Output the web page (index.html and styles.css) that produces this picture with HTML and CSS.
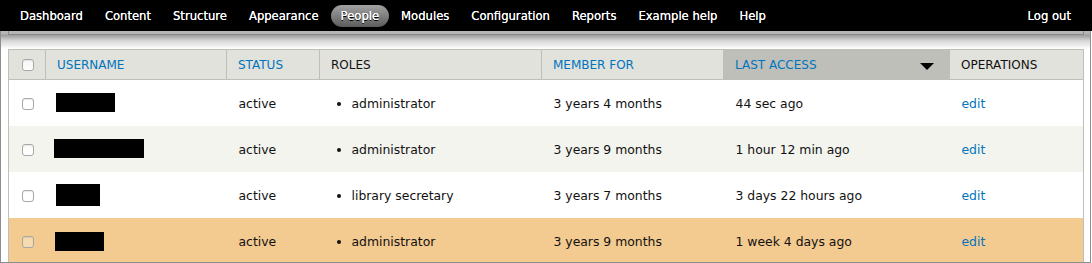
FILE: index.html
```html
<!DOCTYPE html>
<html lang="en">
<head>
  <meta charset="UTF-8" />
  <title>People</title>
  <link rel="stylesheet" href="styles.css">
</head>
<body>
  <div class="toolbar">
    <ul class="menu">
      <li><a href="#">Dashboard</a></li>
      <li><a href="#">Content</a></li>
      <li><a href="#">Structure</a></li>
      <li><a href="#">Appearance</a></li>
      <li><a href="#" class="active">People</a></li>
      <li><a href="#">Modules</a></li>
      <li><a href="#">Configuration</a></li>
      <li><a href="#">Reports</a></li>
      <li><a href="#">Example help</a></li>
      <li><a href="#">Help</a></li>
    </ul>
    <a href="#" class="logout">Log out</a>
  </div>

  <div class="frame">
    <div class="drawer"></div>

    <table class="people">
      <colgroup>
        <col class="c-check"><col class="c-user"><col class="c-status"><col class="c-roles">
        <col class="c-member"><col class="c-access"><col class="c-ops">
      </colgroup>
      <thead>
        <tr>
          <th><span class="checkbox"></span></th>
          <th><a href="#">Username</a></th>
          <th><a href="#">Status</a></th>
          <th>Roles</th>
          <th><a href="#">Member for</a></th>
          <th class="sorted"><a href="#">Last access</a><span class="arrow"></span></th>
          <th>Operations</th>
        </tr>
      </thead>
      <tbody>
        <tr>
          <td><span class="checkbox"></span></td>
          <td><span class="redact r1"></span></td>
          <td>active</td>
          <td><ul class="roles"><li>administrator</li></ul></td>
          <td>3 years 4 months</td>
          <td>44 sec ago</td>
          <td><a href="#">edit</a></td>
        </tr>
        <tr class="even">
          <td><span class="checkbox"></span></td>
          <td><span class="redact r2"></span></td>
          <td>active</td>
          <td><ul class="roles"><li>administrator</li></ul></td>
          <td>3 years 9 months</td>
          <td>1 hour 12 min ago</td>
          <td><a href="#">edit</a></td>
        </tr>
        <tr>
          <td><span class="checkbox"></span></td>
          <td><span class="redact r3"></span></td>
          <td>active</td>
          <td><ul class="roles"><li>library secretary</li></ul></td>
          <td>3 years 7 months</td>
          <td>3 days 22 hours ago</td>
          <td><a href="#">edit</a></td>
        </tr>
        <tr class="hover">
          <td><span class="checkbox"></span></td>
          <td><span class="redact r4"></span></td>
          <td>active</td>
          <td><ul class="roles"><li>administrator</li></ul></td>
          <td>3 years 9 months</td>
          <td>1 week 4 days ago</td>
          <td><a href="#">edit</a></td>
        </tr>
      </tbody>
    </table>
  </div>
</body>
</html>
```

FILE: styles.css
```css
:root {
  --link: #0074bd;
  --head-bg: #e1e2dc;
  --sorted-bg: #bebfb9;
  --line: #bebfb9;
  --even: #f3f4ee;
  --hover: #f3ca8f;
  --font: 'DejaVu Sans', sans-serif;
}

body {
  margin: 0;
  width: 1092px;
  height: 263px;
  overflow: hidden;
  font-family: var(--font);
  background: #fff;
  color: #111;
}

/* toolbar */
.toolbar {
  height: 31px;
  background: #000;
  display: flex;
  align-items: center;
  justify-content: space-between;
  padding: 0 21px 0 10px;
  position: relative;
  z-index: 2;
}

.menu {
  list-style: none;
  margin: 0;
  padding: 0;
  display: flex;
  gap: 2px;
}

.menu a,
.logout {
  display: block;
  padding: 0 10px;
  height: 22px;
  line-height: 22px;
  border-radius: 11px;
  color: #fff;
  text-decoration: none;
  font-size: 11.6px;
  text-shadow: 0 0 0.4px #fff, 0 1px 0 #000;
}

.logout {
  padding: 0;
}

.menu a.active {
  background: linear-gradient(#a2a2a2, #5c5c5c);
}

/* page frame below toolbar */
.frame {
  width: 1091px;
  height: 232px;
  box-sizing: border-box;
  border: 1px solid #8e8e8e;
  border-top: none;
  background: linear-gradient(#b8b8b8 0, #b4b4b4 3px, #9c9c9c 4px, #d8d8d8 10px, #fff 18px);
  overflow: hidden;
}

.drawer {
  height: 3px;
  margin: 0 6px 14px 7px;
  border: 1px solid #8a8a8a;
  border-top: none;
}

/* people table */
.people {
  width: 1075px;
  margin-left: 7px;
  table-layout: fixed;
  border-collapse: collapse;
  border: 1px solid var(--line);
  font-size: 12.4px;
  background: #fff;
}

.c-check { width: 37px; }
.c-user { width: 181px; }
.c-status { width: 93px; }
.c-roles { width: 222px; }
.c-member { width: 182px; }
.c-access { width: 226px; }
.c-ops { width: 134px; }

.people th {
  height: 29px;
  padding: 0 11px;
  background: var(--head-bg);
  border: 1px solid var(--line);
  text-align: left;
  font-weight: normal;
  font-size: 12px;
  text-transform: uppercase;
  color: #111;
}

.people th.sorted {
  background: var(--sorted-bg);
}

.people td {
  height: 46px;
  padding: 0 12px;
}

.people th:first-child,
.people td:first-child {
  padding: 0 0 0 13px;
}

.people a {
  color: var(--link);
  text-decoration: none;
}

.people tr.even td {
  background: var(--even);
}

.people tr.hover td {
  background: var(--hover);
}

.arrow {
  float: right;
  margin: 5px 4px 0 0;
  width: 0;
  height: 0;
  border-left: 7px solid transparent;
  border-right: 7px solid transparent;
  border-top: 7px solid #000;
}

.checkbox {
  display: block;
  width: 10px;
  height: 10px;
  border: 1px solid #a8a8a8;
  border-radius: 3px;
  background: linear-gradient(rgba(255, 255, 255, 0.7), rgba(255, 255, 255, 0.95));
  box-shadow: inset 0 1px 1px rgba(0, 0, 0, 0.08);
}

.people tbody .checkbox {
  margin-top: 2px;
}

.hover .checkbox {
  background: rgba(255, 255, 255, 0.3);
}

.redact {
  display: block;
  background: #000;
}

.r1 { width: 59px; height: 19px; margin: -2px 0 0 -2px; }
.r2 { width: 90px; height: 19px; margin: -2px 0 0 -4px; }
.r3 { width: 44px; height: 22px; margin: 0 0 0 -2px; }
.r4 { width: 49px; height: 19px; margin: 0 0 0 -3px; }

.roles {
  margin: 0;
  padding-left: 20px;
}
```
